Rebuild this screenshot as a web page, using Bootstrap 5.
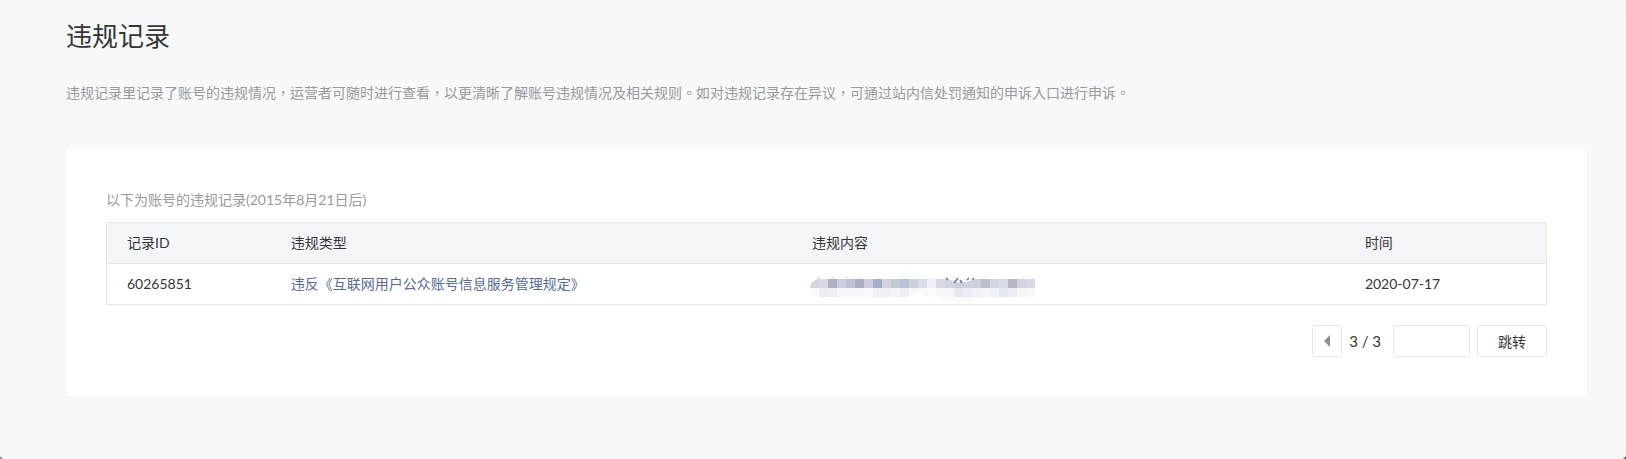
<!DOCTYPE html>
<html lang="zh-CN">
<head>
<meta charset="utf-8">
<meta name="viewport" content="width=device-width, initial-scale=1">
<title>违规记录</title>
<link href="https://cdn.jsdelivr.net/npm/bootstrap@5.3.0/dist/css/bootstrap.min.css" rel="stylesheet">
<style>
body { background: #f6f6f6; color: #353535; font: 14px/22px Lato, "Noto Sans CJK SC", sans-serif; }
.page-area { background: #f6f8fa; margin-top: 17px; padding: 0 39px 46px 66px; }
.page-title { font-size: 26px; line-height: 38px; margin: 0 0 26px; font-weight: 400; }
.page-desc { color: #9a9a9a; font-family: "Noto Sans CJK TC", sans-serif; margin: 0 0 46px; }
.panel { background: #fff; padding: 40px; border-radius: 3px; box-shadow: 0 1px 3px rgba(0,0,0,.03); }
.hint { color: #9a9a9a; margin-bottom: 11px; }
.records { border: 1px solid #e4e8eb; margin: 0; color: #353535; table-layout: fixed; }
.records th { background: #f4f5f9; font-weight: 400; }
.records th, .records td { padding: 9px 20px; border-bottom: 1px solid #e4e8eb; color: inherit; }
.records a { color: #576b95; }
.col-id { width: 11.4%; }
.col-type { width: 36.2%; }
.col-content { width: 38.4%; }
.masked { display: block; overflow: visible; }
.pager { margin-top: 20px; gap: 7px; }
.pager .btn, .pager .form-control { height: 32px; border: 1px solid #e4e8eb; border-radius: 3px; padding: 0; font-size: 14px; background: #fff; color: #353535; }
.pager .btn-prev { width: 30px; }
.pager .btn-jump { width: 70px; }
.pager .form-control { width: 77px; }
.page-count { font-size: 15px; padding-right: 5px; }
.window-edge {
  height: 16px;
  background:
    radial-gradient(circle at 100% 0, transparent 6px, #8c8c8c 7px) left bottom / 6px 6px no-repeat,
    radial-gradient(circle at 0 0, transparent 6px, #6e5a58 7px) right bottom / 6px 6px no-repeat;
}
</style>
</head>
<body>
<main class="page-area">
  <h1 class="page-title">违规记录</h1>
  <p class="page-desc" lang="zh-TW">违规记录里记录了账号的违规情况，运营者可随时进行查看，以更清晰了解账号违规情况及相关规则。如对违规记录存在异议，可通过站内信处罚通知的申诉入口进行申诉。</p>
  <section class="panel">
    <p class="hint">以下为账号的违规记录(2015年8月21日后)</p>
    <table class="table records">
      <colgroup><col class="col-id"><col class="col-type"><col class="col-content"><col></colgroup>
      <thead><tr><th scope="col">记录ID</th><th scope="col">违规类型</th><th scope="col">违规内容</th><th scope="col">时间</th></tr></thead>
      <tbody><tr>
        <td>60265851</td>
        <td><a href="#" class="text-decoration-none">违反《互联网用户公众账号信息服务管理规定》</a></td>
        <td>
          <svg class="masked" width="225" height="22" viewBox="2 0 225 22" role="img" aria-label="已打码内容">
            <defs><clipPath id="maskShape"><path d="M9 6H225V24H9A9 9 0 0 1 9 6Z"/></clipPath></defs>
            <ellipse cx="97" cy="5" rx="15" ry="7" fill="#fafbfc"/>
            <ellipse cx="151" cy="20" rx="26" ry="9" fill="#fafafc"/>
            <ellipse cx="216" cy="7" rx="9" ry="4" fill="#fafbfc"/>
            <path d="M7 5h4M22 4.500h2M36 4.500h2M50 4.500h2" stroke="#c3d8dd"/>
            <g clip-path="url(#maskShape)" shape-rendering="crispEdges" id="maskCells"></g>
            <path d="M98 24Q107 16 116 24Z" fill="#fff"/>
            <path d="M138 6Q151 13 165 6Z" fill="#fbfbfd"/>
            <path d="M136 5l2 2M148 5l-4 5M150 7l2 3M159 5l-2 2M163 5v2" stroke="#66759a" stroke-width="1.500" fill="none"/>
          </svg>
        </td>
        <td>2020-07-17</td>
      </tr></tbody>
    </table>
    <div class="pager d-flex justify-content-end align-items-center">
      <button type="button" class="btn btn-prev d-flex align-items-center justify-content-center" aria-label="上一页">
        <svg width="6" height="12" viewBox="0 0 6 12" aria-hidden="true"><path d="M6 0v12L0 6z" fill="#8f8f8f"/></svg>
      </button>
      <span class="page-count">3 / 3</span>
      <input type="text" class="form-control" aria-label="页码">
      <button type="button" class="btn btn-jump">跳转</button>
    </div>
  </section>
</main>
<footer class="window-edge"></footer>
<script src="https://cdn.jsdelivr.net/npm/bootstrap@5.3.0/dist/js/bootstrap.bundle.min.js"></script>
<script>
// Two rows of 9px cells cover the masked text
const rows = [
  'd3d5e0 d6d9e2 b0b0c4 cbcfdf bcc2d8 acacc2 cccfdb a5aec8 d2d5df c4c7d4 b9c2d3 ccd0dd d6dde8 eff1f6 d7d9e2 d2d5df cdd0dc d0d3df ccd0de bcbfd0 d3d6e0 d8dde8 b5b6c8 d2d5df d7dae3',
  'f8f9fb ededf4 eeeff5 f8f8fb f8f8fb f6f6fa f8f9fb f1f1f5 f0f1f6 f4f5f8 ededf2 f6f7fa fafafc fafafc f8f8fb f6f6fa e5e8f0 ebeef4 f0f1f6 f6f6fa f0f1f6 e4e8f0 ecedf4 f6f6fa f8f8fb'
];
document.getElementById('maskCells').innerHTML = rows.map((row, r) =>
  row.split(' ').map((c, i) => `<rect x="${i * 9}" y="${6 + r * 9}" width="9" height="9" fill="#${c}"/>`).join('')
).join('');
</script>
</body>
</html>
